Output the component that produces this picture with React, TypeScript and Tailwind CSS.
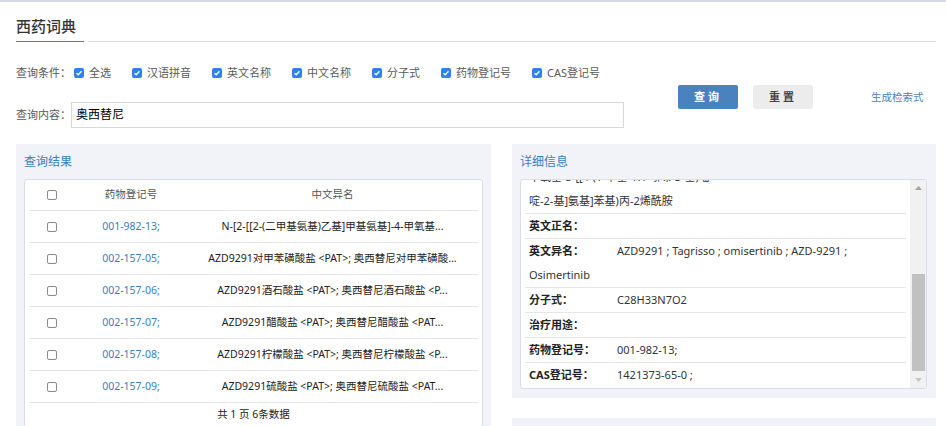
const FONT = { fontFamily: '"Noto Sans", "Noto Sans CJK SC", sans-serif' }

const CONDITIONS = ['全选', '汉语拼音', '英文名称', '中文名称', '分子式', '药物登记号', 'CAS登记号']

const ROWS = [
  { reg: '001-982-13;', name: 'N-[2-[[2-(二甲基氨基)乙基]甲基氨基]-4-甲氧基...' },
  { reg: '002-157-05;', name: 'AZD9291对甲苯磺酸盐 <PAT>; 奥西替尼对甲苯磺酸...' },
  { reg: '002-157-06;', name: 'AZD9291酒石酸盐 <PAT>; 奥西替尼酒石酸盐 <P...' },
  { reg: '002-157-07;', name: 'AZD9291醋酸盐 <PAT>; 奥西替尼醋酸盐 <PAT...' },
  { reg: '002-157-08;', name: 'AZD9291柠檬酸盐 <PAT>; 奥西替尼柠檬酸盐 <P...' },
  { reg: '002-157-09;', name: 'AZD9291硫酸盐 <PAT>; 奥西替尼硫酸盐 <PAT...' },
]

const DETAILS = [
  { label: '分子式：', value: 'C28H33N7O2' },
  { label: '治疗用途：', value: '' },
  { label: '药物登记号：', value: '001-982-13;' },
  { label: 'CAS登记号：', value: '1421373-65-0 ;' },
]

function Checked() {
  return (
    <span className="w-[10px] h-[10px] rounded-[2px] bg-[#2f7ff0] flex items-center justify-center shrink-0">
      <svg width="8" height="8" viewBox="0 0 8 8">
        <path d="M1.5 4.2 L3.2 5.8 L6.5 2.2" stroke="white" strokeWidth="1.4" fill="none" />
      </svg>
    </span>
  )
}

function Box() {
  return <span className="w-[10px] h-[10px] rounded-[2px] border border-[#8c8c8c] bg-white block" />
}

export default function App() {
  return (
    <div className="w-[946px] h-[426px] overflow-hidden bg-white" style={FONT}>
      <div className="h-[2px] bg-[#d5d8e7]" />
      <div className="pl-4 pr-[10px]">
        {/* 标题 */}
        <div className="flex items-end h-[40px]">
          <div className="w-[68px] border-b border-[#4a7cb0] pb-[5px] text-[15px] leading-[20px] font-medium text-[#333]">
            西药词典
          </div>
          <div className="ml-1 flex-1 border-b border-[#d5d9e3]" />
        </div>

        {/* 查询条件 */}
        <div className="flex">
          <div className="w-[608px]">
            <div className="mt-[21px] h-5 flex items-center text-[11px] text-[#5a5a5a]">
              <span className="w-[58px]">查询条件：</span>
              {CONDITIONS.map(c => (
                <div key={c} className="flex items-center gap-[5px] pr-[21px]">
                  <Checked />
                  <span>{c}</span>
                </div>
              ))}
            </div>
            <div className="mt-[19px] flex items-center">
              <span className="w-[55px] text-[11px] text-[#5a5a5a]">查询内容：</span>
              <div className="flex-1 h-[26px] border border-[#d3d8e3] pl-1 flex items-center text-[12px] text-black">
                奥西替尼
              </div>
            </div>
          </div>
          <div className="ml-[54px] mt-[43px] flex items-start">
            <button className="w-[60px] h-[24px] rounded-[2px] bg-[#4a81bf] text-white text-[11px] font-bold tracking-[3px]">查询</button>
            <button className="ml-[15px] w-[60px] h-[24px] rounded-[2px] bg-[#ececec] text-[#444] text-[11px] font-bold tracking-[3px]">重置</button>
            <span className="ml-[58px] mt-[5px] text-[10.5px] text-[#4a7fb5]">生成检索式</span>
          </div>
        </div>

        <div className="mt-4 flex gap-[21px]">
          {/* 查询结果 */}
          <div className="w-[475px] h-[300px] bg-[#f2f3f8] px-2 pt-[10px]">
            <div className="text-[12px] leading-4 text-[#3a7dc0] mb-[9px]">查询结果</div>
            <div className="bg-white border border-[#d9dde7] rounded-[3px] px-1">
              <div className="grid grid-cols-[46px_112px_1fr] h-[31px] items-center border-b border-[#e6e6e6] text-[10.5px] text-[#555]">
                <div className="flex justify-center"><Box /></div>
                <div className="text-center">药物登记号</div>
                <div className="text-center">中文异名</div>
              </div>
              {ROWS.map(r => (
                <div key={r.reg} className="grid grid-cols-[46px_112px_1fr] h-[32px] items-center border-b border-[#e6e6e6] text-[10.5px]">
                  <div className="flex justify-center"><Box /></div>
                  <div className="text-center text-[#3d7cc0]">{r.reg}</div>
                  <div className="text-center text-[#222] whitespace-nowrap overflow-hidden">{r.name}</div>
                </div>
              ))}
              <div className="h-6 flex items-center justify-center text-[10.5px] text-[#222]">共 1 页 6条数据</div>
            </div>
          </div>

          {/* 详细信息 */}
          <div className="w-[424px] flex flex-col">
            <div className="h-[254px] bg-[#f2f3f8] pl-2 pr-[9px] pt-[10px]">
              <div className="text-[12px] leading-4 text-[#3a7dc0] mb-[9px]">详细信息</div>
              <div className="h-[210px] bg-white border border-[#d9dde7] rounded-[3px] flex">
                <div className="flex-1 overflow-hidden px-1 text-[11px] leading-6 text-[#333]">
                  {/* 中文正名（已滚动，上半部分被遮住） */}
                  <div className="-mt-[15px] border-b border-[#e6e6e6] px-1">
                    <div className="whitespace-nowrap overflow-hidden">甲氧基-5-[[4-(1-甲基-1H-吲哚-3-基)嘧</div>
                    <div className="whitespace-nowrap overflow-hidden">啶-2-基]氨基]苯基)丙-2烯酰胺</div>
                  </div>
                  <div className="border-b border-[#e6e6e6] px-1">
                    <span className="inline-block w-[88px] font-bold text-[#222]">英文正名：</span>
                  </div>
                  <div className="border-b border-[#e6e6e6] px-1">
                    <span className="inline-block w-[88px] font-bold text-[#222]">英文异名：</span>
                    AZD9291 ; Tagrisso ; omisertinib ; AZD-9291 ;<br />Osimertinib
                  </div>
                  {DETAILS.map((d, i) => (
                    <div key={d.label} className={`px-1 ${i < 3 ? 'border-b border-[#e6e6e6]' : ''}`}>
                      <span className="inline-block w-[88px] font-bold text-[#222]">{d.label}</span>
                      {d.value}
                    </div>
                  ))}
                </div>
                {/* 滚动条 */}
                <div className="w-[16px] bg-[#f1f1f1] flex flex-col">
                  <div className="h-[17px] flex items-center justify-center">
                    <svg width="7" height="4" viewBox="0 0 7 4"><path d="M0 4 L3.5 0 L7 4 Z" fill="#a3a3a3" /></svg>
                  </div>
                  <div className="h-[77px]" />
                  <div className="ml-[2px] w-[13px] h-[98px] bg-[#c1c1c1]" />
                  <div className="flex-1" />
                  <div className="h-[17px] flex items-center justify-center">
                    <svg width="7" height="4" viewBox="0 0 7 4"><path d="M0 0 L7 0 L3.5 4 Z" fill="#c6c6c6" /></svg>
                  </div>
                </div>
              </div>
            </div>
            <div className="mt-[20px] h-[40px] bg-[#f2f3f8]" />
          </div>
        </div>
      </div>
    </div>
  )
}
